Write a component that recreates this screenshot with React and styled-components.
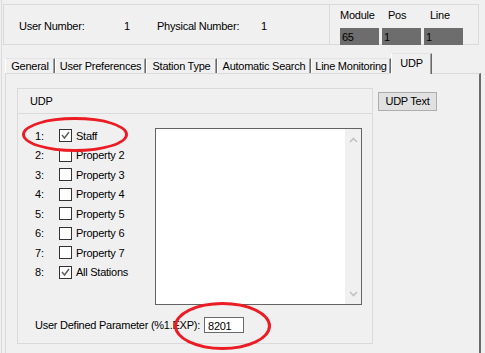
import styled, { createGlobalStyle } from 'styled-components'

const GlobalStyle = createGlobalStyle`
  body {
    margin: 0;
    background-color: #f0f0f0;
    font-family: 'Liberation Sans', Arial, sans-serif;
    font-size: 11px;
    letter-spacing: -0.25px;
    color: #000;
  }
`

const tabs = [
  { label: 'General', width: 50 },
  { label: 'User Preferences', width: 91 },
  { label: 'Station Type', width: 71 },
  { label: 'Automatic Search', width: 94 },
  { label: 'Line Monitoring', width: 80 },
  { label: 'UDP', width: 41, active: true },
]

const udpRows = [
  { n: 1, label: 'Staff', checked: true },
  { n: 2, label: 'Property 2' },
  { n: 3, label: 'Property 3' },
  { n: 4, label: 'Property 4' },
  { n: 5, label: 'Property 5' },
  { n: 6, label: 'Property 6' },
  { n: 7, label: 'Property 7' },
  { n: 8, label: 'All Stations', checked: true },
]

const locations = [
  { label: 'Module', value: '65', indent: 0 },
  { label: 'Pos', value: '1', indent: 6 },
  { label: 'Line', value: '1', indent: 6 },
]

const App = () => {
  return (
    <>
      <GlobalStyle />
      <Window>
        <InfoPanel>
          <NumberInfo>
            <InfoLabel $w={105}>User Number:</InfoLabel>
            <InfoLabel $w={33}>1</InfoLabel>
            <InfoLabel $w={104}>Physical Number:</InfoLabel>
            <InfoLabel $w={20}>1</InfoLabel>
          </NumberInfo>
          <LocationInfo>
            {locations.map((l) => (
              <LocationCol key={l.label}>
                <LocationLabel $indent={l.indent}>{l.label}</LocationLabel>
                <LocationValue>{l.value}</LocationValue>
              </LocationCol>
            ))}
          </LocationInfo>
        </InfoPanel>

        <TabStrip>
          {tabs.map((t) => (
            <Tab key={t.label} $w={t.width} $active={t.active}>
              {t.label}
            </Tab>
          ))}
        </TabStrip>

        <TabPage>
          <GroupBox>
            <GroupHeader>UDP</GroupHeader>
            <GroupBody>
              <Columns>
                <RowList>
                  {udpRows.map((r) => (
                    <UdpRow key={r.n}>
                      <RowNumber>{r.n}:</RowNumber>
                      <CheckBox>
                        {r.checked && (
                          <svg width='11' height='11' viewBox='0 0 11 11'>
                            <polyline
                              points='2,5 4.5,8 9,2'
                              fill='none'
                              stroke='#5c5c5c'
                              strokeWidth='1.4'
                            />
                          </svg>
                        )}
                      </CheckBox>
                      <RowLabel>{r.label}</RowLabel>
                    </UdpRow>
                  ))}
                </RowList>
                <ListBox>
                  <ListArea />
                  <ScrollBar>
                    <svg width='9' height='6' viewBox='0 0 9 6'>
                      <polyline
                        points='1,5 4.5,1.5 8,5'
                        fill='none'
                        stroke='#c2c2c2'
                        strokeWidth='1.6'
                      />
                    </svg>
                    <svg width='9' height='6' viewBox='0 0 9 6'>
                      <polyline
                        points='1,1 4.5,4.5 8,1'
                        fill='none'
                        stroke='#c2c2c2'
                        strokeWidth='1.6'
                      />
                    </svg>
                  </ScrollBar>
                </ListBox>
              </Columns>
              <ParamRow>
                <ParamLabel>User Defined Parameter (%1.EXP):</ParamLabel>
                <ParamInput>8201</ParamInput>
              </ParamRow>
            </GroupBody>
          </GroupBox>
          <TextButton>UDP Text</TextButton>
        </TabPage>

        <Ellipse $x={20} $y={117} $w={106} $h={35} />
        <Ellipse $x={172} $y={302} $w={97} $h={48} />
      </Window>
    </>
  )
}

export default App

const Window = styled.div`
  position: relative;
  width: 484px;
  height: 353px;
  overflow: hidden;
  margin-left: 1px;
  border-left: 1px solid #dadada;
  padding-top: 4px;
  box-sizing: border-box;
`
const InfoPanel = styled.div`
  display: flex;
  margin-left: 1px;
  width: 476px;
  height: 41px;
  border: 1px solid #dadada;
  box-sizing: border-box;
`
const NumberInfo = styled.div`
  display: flex;
  align-items: center;
  width: 325px;
  padding: 3px 0 0 15px;
  box-sizing: border-box;
`
const InfoLabel = styled.span`
  width: ${(p) => p.$w}px;
  white-space: nowrap;
`
const LocationInfo = styled.div`
  display: flex;
  gap: 3px;
  flex: 1;
  border-left: 1px solid #dadada;
  padding: 4px 0 0 10px;
`
const LocationCol = styled.div`
  display: flex;
  flex-direction: column;
  width: 39px;
`
const LocationLabel = styled.span`
  height: 13px;
  line-height: 13px;
  padding-left: ${(p) => p.$indent}px;
  margin-bottom: 6px;
  white-space: nowrap;
`
const LocationValue = styled.div`
  height: 17px;
  line-height: 18px;
  background-color: #6d6d6d;
  padding-left: 2px;
  color: #000;
`
const TabStrip = styled.div`
  display: flex;
  align-items: flex-end;
  height: 21px;
  margin: 8px 0 -1px 3px;
  position: relative;
  z-index: 1;
`
const Tab = styled.div`
  width: ${(p) => p.$w}px;
  height: ${(p) => (p.$active ? 21 : 15)}px;
  box-sizing: border-box;
  display: flex;
  justify-content: center;
  align-items: ${(p) => (p.$active ? 'flex-start' : 'center')};
  padding-top: ${(p) => (p.$active ? 3 : 0)}px;
  margin-bottom: ${(p) => (p.$active ? 0 : 1)}px;
  white-space: nowrap;
  background-color: #f0f0f0;
  border-top: 1px solid #e4e4e4;
  border-left: 1px solid #ffffff;
  border-right: 1px solid #6a6a6a;
  box-shadow: inset -1px 0 0 #a0a0a0;
`
const TabPage = styled.div`
  display: flex;
  align-items: flex-start;
  gap: 5px;
  margin-left: 3px;
  width: 476px;
  height: 300px;
  box-sizing: border-box;
  border-top: 1px solid #dadada;
  border-left: 1px solid #dadada;
  border-right: 2px solid #6a6a6a;
  padding: 14px 0 0 11px;
`
const GroupBox = styled.div`
  width: 356px;
  height: 256px;
  box-sizing: border-box;
  border: 1px solid #dadada;
`
const GroupHeader = styled.div`
  height: 24px;
  line-height: 25px;
  padding-left: 12px;
  border-bottom: 1px solid #dadada;
`
const GroupBody = styled.div`
  padding-left: 17px;
`
const Columns = styled.div`
  display: flex;
`
const RowList = styled.div`
  width: 120px;
  padding-top: 12px;
`
const UdpRow = styled.div`
  display: flex;
  align-items: center;
  height: 19.5px;
`
const RowNumber = styled.span`
  width: 24px;
`
const CheckBox = styled.span`
  display: flex;
  align-items: center;
  justify-content: center;
  width: 13px;
  height: 13px;
  box-sizing: border-box;
  border: 1px solid #333;
  background-color: #fff;
  margin-right: 4px;
`
const RowLabel = styled.span`
  white-space: nowrap;
`
const ListBox = styled.div`
  display: flex;
  margin-top: 14px;
  width: 207px;
  height: 177px;
  box-sizing: border-box;
  border: 1px solid #646464;
  background-color: #fff;
`
const ListArea = styled.div`
  flex: 1;
`
const ScrollBar = styled.div`
  width: 16px;
  display: flex;
  flex-direction: column;
  justify-content: space-between;
  align-items: center;
  padding: 8px 0 7px;
  background-color: #f0f0f0;
`
const ParamRow = styled.div`
  display: flex;
  align-items: center;
  margin-top: 12px;
`
const ParamLabel = styled.span`
  margin-right: 4px;
  white-space: nowrap;
`
const ParamInput = styled.div`
  width: 40px;
  height: 16px;
  line-height: 16px;
  box-sizing: border-box;
  border: 1px solid #6a6a6a;
  background-color: #fff;
  padding-left: 3px;
`
const TextButton = styled.div`
  margin-top: 4px;
  width: 59px;
  height: 19px;
  line-height: 17px;
  box-sizing: border-box;
  text-align: center;
  border: 1px solid #adadad;
  background-color: #e1e1e1;
`
const Ellipse = styled.div`
  position: absolute;
  left: ${(p) => p.$x}px;
  top: ${(p) => p.$y}px;
  width: ${(p) => p.$w}px;
  height: ${(p) => p.$h}px;
  box-sizing: border-box;
  border: 3px solid #ec1c24;
  border-radius: 50%;
  pointer-events: none;
`
